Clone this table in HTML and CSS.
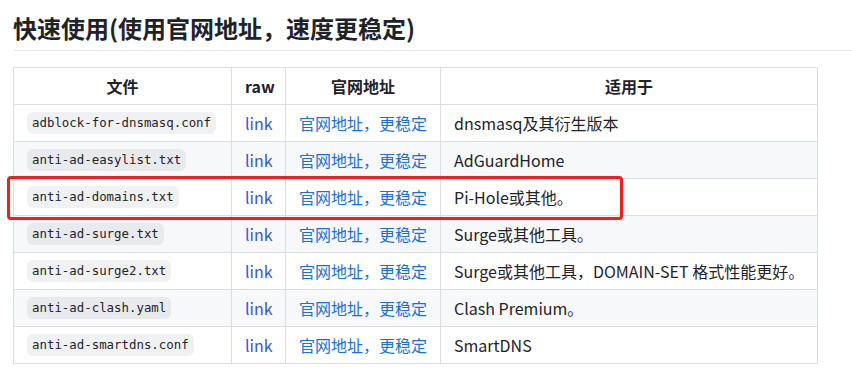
FILE: index.html
```html
<!DOCTYPE html>
<html lang="zh-CN">
<head>
<meta charset="utf-8">
<title>快速使用</title>
<link rel="stylesheet" href="styles.css">
</head>
<body>
<div class="page">
  <h2 class="title">快速使用(使用官网地址，速度更稳定)</h2>
  <div class="table-wrap">
    <table class="files">
      <colgroup>
        <col class="c-file">
        <col class="c-raw">
        <col class="c-site">
        <col class="c-use">
      </colgroup>
      <thead>
        <tr><th>文件</th><th>raw</th><th>官网地址</th><th>适用于</th></tr>
      </thead>
      <tbody>
        <tr><td><code>adblock-for-dnsmasq.conf</code></td><td><a class="raw" href="#">link</a></td><td><a class="site" href="#">官网地址，更稳定</a></td><td>dnsmasq及其衍生版本</td></tr>
        <tr><td><code>anti-ad-easylist.txt</code></td><td><a class="raw" href="#">link</a></td><td><a class="site" href="#">官网地址，更稳定</a></td><td>AdGuardHome</td></tr>
        <tr><td><code>anti-ad-domains.txt</code></td><td><a class="raw" href="#">link</a></td><td><a class="site" href="#">官网地址，更稳定</a></td><td>Pi-Hole或其他。</td></tr>
        <tr><td><code>anti-ad-surge.txt</code></td><td><a class="raw" href="#">link</a></td><td><a class="site" href="#">官网地址，更稳定</a></td><td>Surge或其他工具。</td></tr>
        <tr><td><code>anti-ad-surge2.txt</code></td><td><a class="raw" href="#">link</a></td><td><a class="site" href="#">官网地址，更稳定</a></td><td>Surge或其他工具，DOMAIN-SET 格式性能更好。</td></tr>
        <tr><td><code>anti-ad-clash.yaml</code></td><td><a class="raw" href="#">link</a></td><td><a class="site" href="#">官网地址，更稳定</a></td><td>Clash Premium。</td></tr>
        <tr><td><code>anti-ad-smartdns.conf</code></td><td><a class="raw" href="#">link</a></td><td><a class="site" href="#">官网地址，更稳定</a></td><td>SmartDNS</td></tr>
      </tbody>
    </table>
    <div class="highlight"></div>
  </div>
</div>
</body>
</html>
```
FILE: styles.css
```css
html, body {
  margin: 0;
  padding: 0;
  background: #ffffff;
}
body {
  width: 852px;
  height: 374px;
  overflow: hidden;
  font-family: "Noto Sans CJK SC", "Noto Sans", sans-serif;
  font-size: 16px;
  color: #1f2328;
}
.page {
  padding: 13px 0 0 13px;
  position: relative;
}
.title {
  margin: 0 0 16px 0;
  padding: 0 0 7px 0;
  font-size: 24px;
  line-height: 30px;
  font-weight: 700;
  color: #1f2328;
  border-bottom: 1px solid #e3e6ea;
}
.table-wrap {
  position: relative;
}
.files {
  border-collapse: collapse;
  border-spacing: 0;
  table-layout: fixed;
  width: 804px;
}
.c-file { width: 218px; }
.c-raw { width: 54px; }
.c-site { width: 155px; }
.c-use { width: 377px; }
.files tr {
  height: 37px;
}
.files th,
.files td {
  border: 1px solid #d8dee4;
  padding: 0 13px;
  height: 36px;
  line-height: 24px;
  white-space: nowrap;
  text-align: left;
  vertical-align: middle;
  box-sizing: border-box;
}
.files th {
  font-weight: 700;
  text-align: center;
}
.files tbody tr:nth-child(even) {
  background: #f6f8fa;
}
.files code {
  display: inline-block;
  vertical-align: top;
  margin-top: 1px;
  font-family: "DejaVu Sans Mono", "Liberation Mono", monospace;
  font-size: 12.4px;
  line-height: 16px;
  padding: 3px 5px;
  background: rgba(129, 139, 152, 0.12);
  border-radius: 6px;
  color: #1f2328;
}
.files a {
  text-decoration: none;
}
.raw {
  color: #3c56c8;
}
.site {
  color: #1a6fd9;
}
.highlight {
  position: absolute;
  left: -6px;
  top: 109px;
  width: 610px;
  height: 38px;
  border: 3px solid #f41d1d;
  border-radius: 4px;
  pointer-events: none;
}
```
